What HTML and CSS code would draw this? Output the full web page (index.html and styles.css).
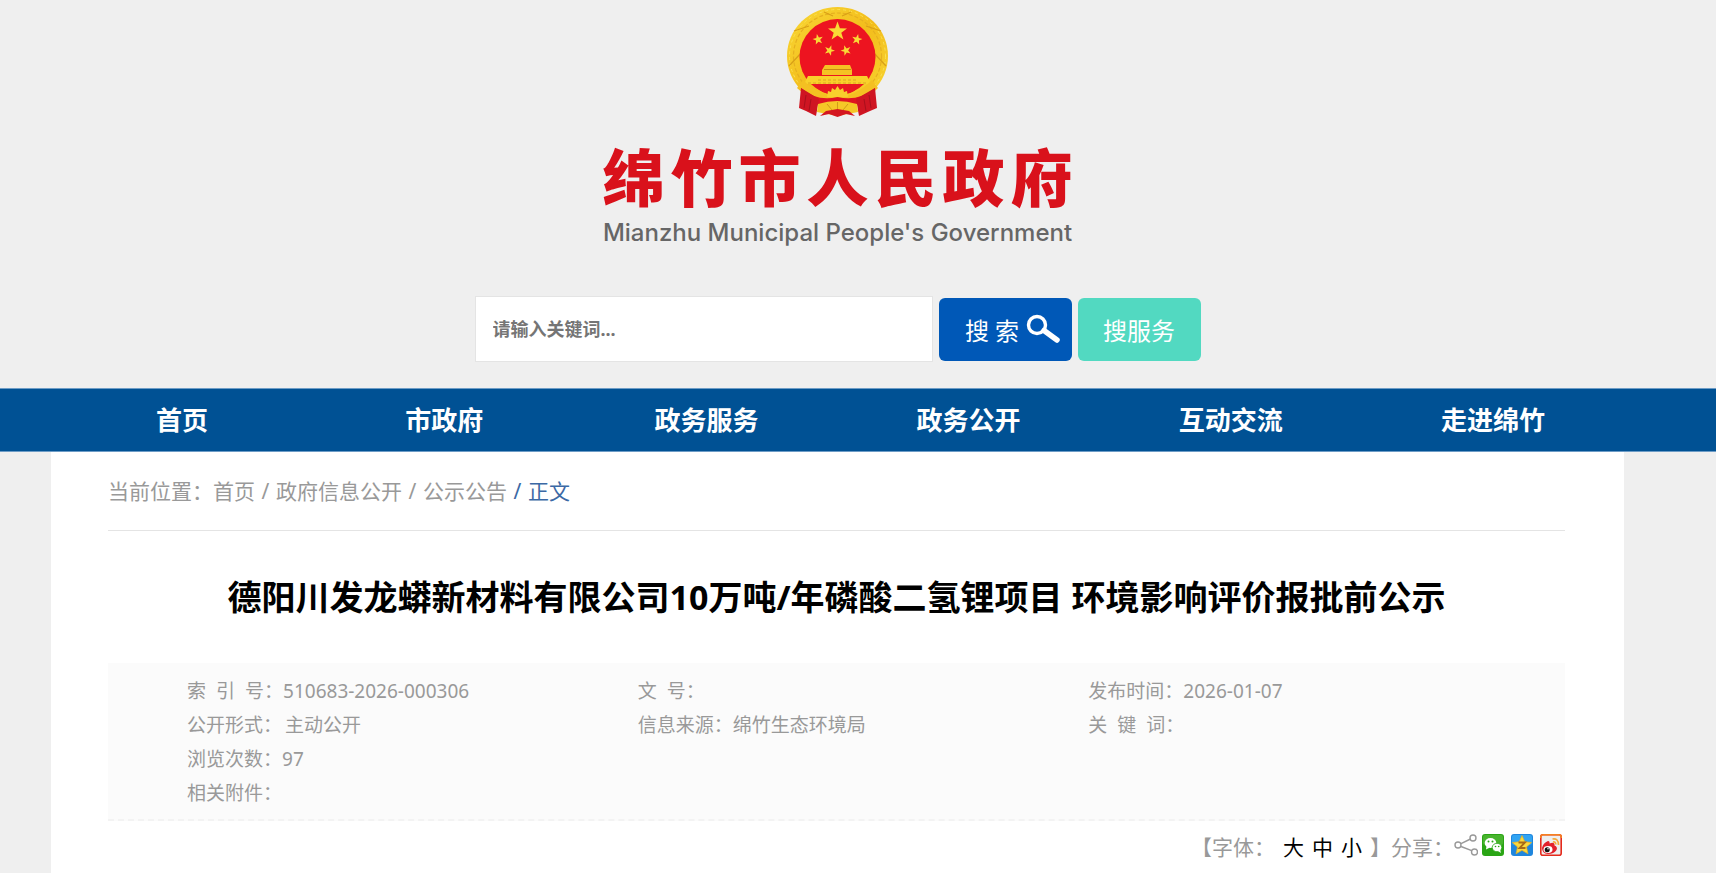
FILE: index.html
```html
<!DOCTYPE html>
<html lang="zh-CN">
<head>
<meta charset="utf-8">
<meta name="viewport" content="width=device-width, initial-scale=1">
<title>绵竹市人民政府</title>
<link rel="stylesheet" href="styles.css">
</head>
<body>
<header class="header">
  <a class="brand" href="#">
    <svg class="emblem" viewBox="17 7 101 110" aria-hidden="true">
      <defs>
        <path id="star" d="M0-10 2.4-3.2 9.5-3.1 3.8 1.2 5.9 8.1 0 4-5.9 8.1-3.8 1.2-9.5-3.1-2.4-3.2Z"/>
        <linearGradient id="gold" x1="0" y1="0" x2="1" y2="1">
          <stop offset="0" stop-color="#f9d936"/><stop offset=".5" stop-color="#f3bd1c"/><stop offset="1" stop-color="#f8d630"/>
        </linearGradient>
      </defs>
      <ellipse cx="67.5" cy="56" rx="50.5" ry="49" fill="url(#gold)"/>
      <ellipse cx="67.5" cy="56" rx="44" ry="43" fill="none" stroke="#e6b020" stroke-width="1.2" stroke-dasharray="4 2"/>
      <ellipse cx="67.5" cy="56" rx="48" ry="46.5" fill="none" stroke="#fbe052" stroke-width="1" stroke-dasharray="3 3"/>
      <path d="M19 66 32 52M116 66 103 52M24 31 39 26M111 31 96 26M54 12 63 16M81 12 72 16" stroke="#d9a017" stroke-width="1.3" fill="none"/>
      <ellipse cx="67.5" cy="57" rx="38" ry="38" fill="#ed1420"/>
      <g fill="#f9d936">
        <use href="#star" transform="translate(67.5 31.5)"/>
        <use href="#star" transform="translate(48 39.5) scale(.55) rotate(-12)"/>
        <use href="#star" transform="translate(87 39.5) scale(.55) rotate(12)"/>
        <use href="#star" transform="translate(59.500 50.500) scale(.55) rotate(20)"/>
        <use href="#star" transform="translate(76 50.500) scale(.55) rotate(-20)"/>
      </g>
      <path d="M55 65H80L82 70V75H52V70Z" fill="#f5c323"/>
      <path d="M54 69.5H81" stroke="#c98a12"/>
      <path d="M38 76H97L101 84H34Z" fill="#f9d12b"/>
      <path d="M38 83H98M48 80H88" stroke="#dca820" stroke-dasharray="3 2" fill="none"/>
      <path d="M33 80Q50 97 67.5 97T102 80L108 88Q91 106 67.5 105T27 88Z" fill="#f4c022"/>
      <path d="M43 84H92Q84 93 76 94L73 90H62L58 94Q48 91 43 84Z" fill="#e91722"/>
      <path d="M57 97 58 91 61 92 62 88 65 90 67.5 86 70 90 73 88 74 92 77 91 78 97Z" fill="#f8cf2c"/>
      <path d="M31 88Q47 102 67.5 97Q88 102 105 88L105 103Q84 107 67.5 102Q51 107 31 103Z" fill="#df1421"/>
      <path d="M31 88 29 108 36 111 46 116 49 99ZM105 88 107 108 100 111 89 116 86 99Z" fill="#cf1522"/>
      <path d="M36 95 34 108M41 99 39 111M99 95 101 108M94 99 96 111" stroke="#a90f1c" fill="none"/>
      <path d="M48 104Q67 98 87 104L88 112 67.5 116 47 112Z" fill="#f5c727"/>
      <path d="M50 116 56 111 67.5 109 79 111 85 116 76 114 67.5 117 59 114Z" fill="#d41620"/>
      <path d="M67.5 109V102M62 110 57 104M73 110 78 104" stroke="#d19a18" fill="none"/>
    </svg>
    <span class="brand-name"><span>绵</span><span>竹</span><span>市</span><span>人</span><span>民</span><span>政</span><span>府</span></span>
    <span class="brand-en">Mianzhu Municipal People's Government</span>
  </a>
  <form class="search">
    <input class="search-input" type="text" placeholder="请输入关键词..." aria-label="请输入关键词">
    <button class="btn btn-search" type="button">搜 索
      <svg class="glass" viewBox="0 0 36 32" aria-hidden="true"><circle cx="12" cy="12" r="8.5" fill="none" stroke="#fff" stroke-width="3.4"/><path d="M19 17.500 32 27" stroke="#fff" stroke-width="5.500" stroke-linecap="round"/></svg>
    </button>
    <button class="btn btn-service" type="button">搜服务</button>
  </form>
</header>

<nav class="nav">
  <ul class="nav-list">
    <li><a href="#">首页</a></li>
    <li><a href="#">市政府</a></li>
    <li><a href="#">政务服务</a></li>
    <li><a href="#">政务公开</a></li>
    <li><a href="#">互动交流</a></li>
    <li><a href="#">走进绵竹</a></li>
  </ul>
</nav>

<main class="content">
  <div class="crumbs">
    <span>当前位置：</span><a href="#">首页</a><span class="sep">/</span><a href="#">政府信息公开</a><span class="sep">/</span><a href="#">公示公告</a><span class="sep current">/</span><span class="current">正文</span>
  </div>
  <h1 class="title">德阳川发龙蟒新材料有限公司10万吨/年磷酸二氢锂项目 环境影响评价报批前公示</h1>
  <dl class="meta">
    <div class="item"><dt class="spaced"><span>索</span><span>引</span><span>号：</span></dt><dd>510683-2026-000306</dd></div>
    <div class="item"><dt class="spaced"><span>文</span><span>号：</span></dt><dd></dd></div>
    <div class="item"><dt>发布时间：</dt><dd>2026-01-07</dd></div>
    <div class="item"><dt>公开形式：</dt><dd class="indent">主动公开</dd></div>
    <div class="item"><dt>信息来源：</dt><dd>绵竹生态环境局</dd></div>
    <div class="item"><dt class="spaced"><span>关</span><span>键</span><span>词：</span></dt><dd></dd></div>
    <div class="item wide"><dt>浏览次数：</dt><dd>97</dd></div>
    <div class="item wide"><dt>相关附件：</dt><dd></dd></div>
  </dl>
  <div class="tools">
    <div class="sizes"><span>【字体：</span><button type="button">大</button><button type="button">中</button><button type="button">小</button><span>】</span></div>
    <span>分享：</span>
    <div class="share">
      <a href="#" aria-label="分享"><svg class="ico-share" viewBox="0 0 24 22"><g fill="none" stroke="#999" stroke-width="1.4"><circle cx="4" cy="11" r="3"/><circle cx="19" cy="4" r="3"/><circle cx="20.5" cy="18" r="3"/><path d="M7 9.7 16.5 5M7 12.5 17.7 16.7"/></g></svg></a>
      <a href="#" aria-label="微信"><svg class="ico" viewBox="0 0 22 22"><rect width="22" height="22" rx="3" fill="#2aa515"/><rect x="1" y="1" width="20" height="10" rx="2" fill="#48b52e"/><ellipse cx="8.5" cy="9" rx="5.8" ry="5" fill="#fff"/><path d="M4.5 12 4 15.5 8 13.5Z" fill="#fff"/><ellipse cx="15" cy="13.5" rx="4.8" ry="4.2" fill="#fff" stroke="#2aa515" stroke-width=".8"/><path d="M16 17 19 19 18 15.5Z" fill="#fff"/><g fill="#2aa515"><circle cx="6.5" cy="7.5" r="1"/><circle cx="10.5" cy="7.5" r="1"/><circle cx="13.5" cy="12.5" r=".8"/><circle cx="16.7" cy="12.5" r=".8"/></g></svg></a>
      <a class="spread" href="#" aria-label="QQ空间"><svg class="ico" viewBox="0 0 22 22"><rect width="22" height="22" rx="3" fill="#1f86dd"/><rect x="1" y="1" width="20" height="10" rx="2" fill="#31a4f2"/><path d="M11 1.5 13.8 7.8 20.6 8.5 15.5 13 17 19.8 11 16.3 5 19.8 6.5 13 1.4 8.5 8.2 7.8Z" fill="#fbd83d" stroke="#e6ad22" stroke-width=".7"/><path d="M7.5 8.5H14L8.5 14H14.5" fill="none" stroke="#a86a18" stroke-width="1.8"/></svg></a>
      <a class="spread" href="#" aria-label="新浪微博"><svg class="ico" viewBox="0 0 22 22"><rect x=".8" y=".8" width="20.4" height="20.4" rx="2" fill="#eee" stroke="#e52a1c" stroke-width="1.6"/><path d="M.8 4V3Q.8.8 3 .8H19Q21.2.8 21.2 3V4" fill="none" stroke="#f58220" stroke-width="1.6"/><path d="M2 14Q3 9 8 7Q10 7 9.5 9.5Q15 7.5 14.5 11.5Q18 13 16.5 16Q14 20 8 20Q2 19.5 2 14Z" fill="#e3202b"/><ellipse cx="8" cy="15.5" rx="4.5" ry="3.4" fill="#fff"/><circle cx="7.2" cy="15.7" r="2.5" fill="#111"/><circle cx="8" cy="14.8" r=".8" fill="#fff"/><path d="M12.5 5Q18.5 4 18.5 11M13 8Q15.8 7.5 15.8 10.5" fill="none" stroke="#f6a83a" stroke-width="1.7"/></svg></a>
    </div>
  </div>
</main>
</body>
</html>
```

FILE: styles.css
```css
* { box-sizing: border-box; }

body {
  margin: 0;
  background: #efefef;
  color: #999;
  font-family: "Noto Sans", "Noto Sans CJK SC", sans-serif;
  font-size: 21px;
}

a { color: inherit; text-decoration: none; }

button {
  border: 0;
  background: none;
  padding: 0;
  font: inherit;
  cursor: pointer;
}

.header,
.nav-list,
.content { margin: 0 92px 0 51px; }

.header {
  display: flex;
  flex-direction: column;
  align-items: center;
  padding: 7px 0 26px;
}

.brand {
  display: flex;
  flex-direction: column;
  align-items: center;
}

.emblem { display: block; width: 101px; height: 110px; }

.brand-name {
  display: flex;
  gap: 6px;
  margin-top: 23px;
  color: #d9111b;
  font-family: "Noto Sans CJK SC", sans-serif;
  font-size: 62px;
  font-weight: 900;
  line-height: 70px;
}

.brand-en {
  margin-top: 8px;
  color: #666;
  font-family: Inter, "Liberation Sans", sans-serif;
  font-size: 24px;
  font-weight: 500;
  line-height: 30px;
}

.search { display: flex; align-items: center; gap: 6px; margin-top: 48px; }

.search-input {
  width: 458px;
  height: 66px;
  padding: 0 17px;
  border: 1px solid #e4e4e4;
  background: #fff;
  font-family: inherit;
  font-size: 18px;
  font-weight: 700;
}

.search-input::placeholder { color: #757575; }

.btn {
  display: flex;
  align-items: center;
  justify-content: center;
  height: 63px;
  border-radius: 6px;
  color: #fff;
  font-size: 24px;
}

.btn-search { gap: 6px; width: 133px; padding-left: 16px; background: #0058b7; }
.btn-service { width: 123px; background: #52d9c1; }
.glass { width: 36px; height: 32px; }

.nav {
  border-top: 1px solid #6d9cc6;
  border-bottom: 1px solid #6d9cc6;
  background: #005194;
}

.nav-list {
  display: grid;
  grid-template-columns: repeat(6, 1fr);
  padding: 0;
  list-style: none;
  text-align: center;
}

.nav-list a {
  display: block;
  color: #fff;
  font-size: 26px;
  font-weight: 700;
  line-height: 62px;
}

.content {
  min-height: 421px;
  padding: 0 59px 6px 57px;
  background: #fff;
}

.crumbs {
  display: flex;
  padding: 24px 0;
  border-bottom: 1px solid #e4e4e4;
  line-height: 30px;
}

.sep { width: 21px; text-align: center; }
.current { color: #3b69a5; }

.title {
  margin: 0;
  padding: 42px 0 41px;
  color: #000;
  font-size: 34px;
  font-weight: 700;
  line-height: 49px;
  text-align: center;
}

.meta {
  display: grid;
  grid-template-columns: repeat(3, 1fr);
  margin: 0;
  padding: 11px 26px 9px 79px;
  border-bottom: 2px dashed #f3f3f3;
  background: #fbfbfb;
  font-size: 19px;
  line-height: 34px;
}

.item { display: flex; min-height: 34px; }
.wide { grid-column: 1 / -1; }
.item dd { margin: 0; }
.spaced { display: flex; gap: 10px; }
.item .indent { margin-left: 3px; }

.tools {
  display: flex;
  justify-content: flex-end;
  align-items: center;
  padding: 11px 3px 0 0;
  line-height: 30px;
}

.sizes { display: flex; gap: 8px; }
.sizes button { color: #000; }
.share { display: flex; align-items: center; gap: 4px; padding-bottom: 4px; }
.share a { display: flex; }
.share .spread { margin-left: 3px; }
.ico-share { width: 24px; height: 22px; }
.ico { width: 22px; height: 22px; }
```
